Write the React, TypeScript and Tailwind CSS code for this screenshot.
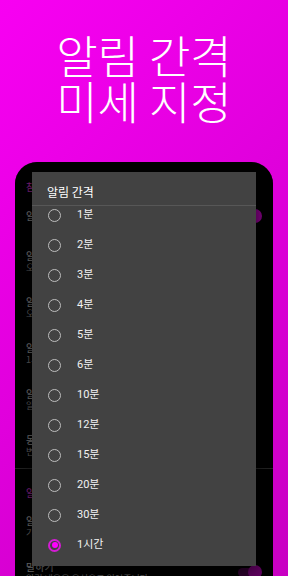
import React from "react";

const options = ["1분", "2분", "3분", "4분", "5분", "6분", "10분", "12분", "15분", "20분", "30분", "1시간"];
const selected = "1시간";

function Row({ title, sub, h = "h-[46px]" }: { title: string; sub: string; h?: string }) {
  return (
    <div className={`${h} flex flex-col justify-center pl-[11px]`}>
      <div className="text-[10px] leading-[12px] text-[#e0e0e0]">{title}</div>
      <div className="text-[9px] leading-[11px] text-[#b0b0b0]">{sub}</div>
    </div>
  );
}

function Toggle() {
  return (
    <div className="relative w-[24px] h-[14px] flex items-center">
      <div className="w-[22px] h-[9px] rounded-full bg-[#7a007a]" />
      <div className="absolute right-0 w-[14px] h-[14px] rounded-full bg-[#ff00ff]" />
    </div>
  );
}

export default function App() {
  const ko = { fontFamily: '"Noto Sans CJK KR", "Noto Sans", sans-serif' };
  const mixed = { fontFamily: 'Roboto, "Noto Sans CJK KR", sans-serif' };
  return (
    <div
      className="w-[288px] h-[576px] overflow-hidden bg-[linear-gradient(135deg,#f800f2_0%,#e000dc_50%,#c800c2_100%)] flex flex-col"
      style={ko}
    >
      <div className="pt-[32px] h-[162px] flex flex-col items-center text-white text-[45px] leading-[46px] font-light">
        <div>알림 간격</div>
        <div>미세 지정</div>
      </div>

      <div className="relative ml-[15px] w-[258px] flex-1 bg-black rounded-t-[22px] overflow-hidden">
        {/* settings screen behind */}
        <div className="flex flex-col pt-[19px]">
          <div className="pl-[11px] text-[10px] leading-[12px] text-[#ff40ff]">참고 사항</div>
          <div className="h-[45px] flex items-center justify-between pl-[11px] pr-[11px]">
            <div className="text-[10px] text-[#e0e0e0]">알림 켜기</div>
            <Toggle />
          </div>
          <Row title="알림 시작 시간" sub="오전 8:00" />
          <Row title="알림 종료 시간" sub="오후 10:00" />
          <Row title="알림 간격" sub="1시간" />
          <Row title="알림음" sub="알림음 선택" />
          <Row title="동작 모드" sub="변경하려면 누르세요" />
          <div className="h-[1px] bg-[#444]" />
          <div className="h-[34px] flex items-end pb-[4px] pl-[11px] text-[10px] leading-[12px] text-[#ff40ff]">알림 방식</div>
          <Row title="알림 진동" sub="기본 진동 패턴" />
          <div className="h-[46px] flex items-center justify-between pr-[11px]">
            <Row title="말하기" sub="알림 내용을 음성으로 읽어줍니다" h="h-[46px]" />
            <div className="relative w-[24px] h-[14px] flex items-center">
              <div className="w-[22px] h-[9px] rounded-full bg-[#5a005a]" />
              <div className="absolute right-0 w-[14px] h-[14px] rounded-full bg-[#c000c0]" />
            </div>
          </div>
        </div>

        {/* scrim */}
        <div className="absolute inset-0 bg-black/50" />

        {/* dialog */}
        <div className="absolute left-[17px] top-[10px] w-[224px] h-[394px] bg-[#424242] shadow-[0_4px_16px_rgba(0,0,0,0.6)] flex flex-col">
          <div className="h-[33px] flex items-center pl-[15px] pt-[6px] text-[12px] text-white">알림 간격</div>
          <div className="h-[1px] bg-[#575757]" />
          <div className="flex-1 overflow-hidden">
            <div className="-mt-[6px] flex flex-col">
              {options.map((o) => (
                <div key={o} className="h-[30px] flex items-center pl-[16px] gap-[16px]">
                  {o === selected ? (
                    <div className="w-[13px] h-[13px] rounded-full border-[2px] border-[#d41cd4] flex items-center justify-center">
                      <div className="w-[6px] h-[6px] rounded-full bg-[#ff00ff]" />
                    </div>
                  ) : (
                    <div className="w-[13px] h-[13px] rounded-full border-[1.5px] border-[#bdbdbd]" />
                  )}
                  <span className="text-[11px] text-[#f2f2f2]" style={mixed}>
                    {o}
                  </span>
                </div>
              ))}
            </div>
          </div>
        </div>
      </div>
    </div>
  );
}
